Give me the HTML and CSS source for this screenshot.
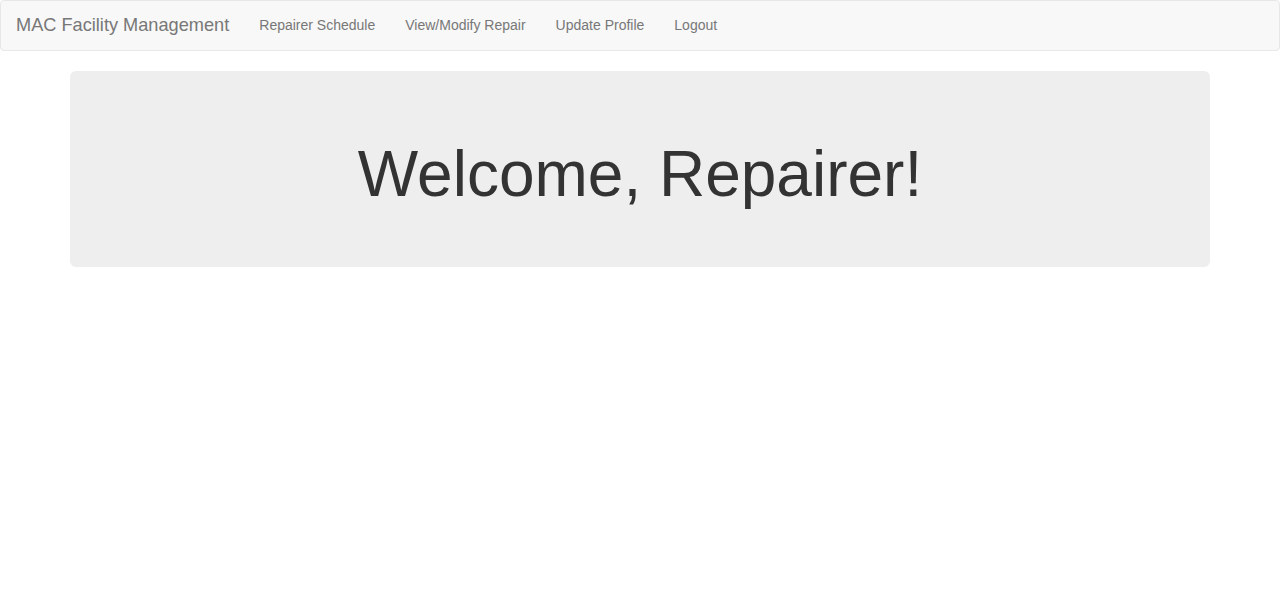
FILE: index.html
```html
<!DOCTYPE html>
<html lang="en">
<head>
<meta charset="utf-8">
<title>MAC Facility Management</title>
<link rel="stylesheet" href="styles.css">
</head>
<body>
<nav class="navbar">
  <a class="brand" href="#">MAC Facility Management</a>
  <ul class="nav">
    <li><a href="#">Repairer Schedule</a></li>
    <li><a href="#">View/Modify Repair</a></li>
    <li><a href="#">Update Profile</a></li>
    <li><a href="#">Logout</a></li>
  </ul>
</nav>
<div class="container">
  <div class="jumbotron">
    <h1>Welcome, Repairer!</h1>
  </div>
</div>
</body>
</html>
```

FILE: styles.css
```css
* { box-sizing: border-box; }
html, body { margin: 0; padding: 0; }
body {
  font-family: "Liberation Sans", Arial, Helvetica, sans-serif;
  font-size: 14px;
  line-height: 1.42857;
  color: #333;
  background: #fff;
}
.navbar {
  display: flex;
  align-items: center;
  height: 51px;
  padding-bottom: 1px;
  background: #f8f8f8;
  border: 1px solid #e7e7e7;
  border-radius: 4px;
  margin-bottom: 20px;
}
.brand {
  padding: 0 15px;
  font-size: 18.2px;
  line-height: 20px;
  color: #777;
  text-decoration: none;
}
.nav {
  display: flex;
  list-style: none;
  margin: 0;
  padding: 0;
}
.nav a {
  display: block;
  padding: 0 15px;
  line-height: 20px;
  color: #777;
  text-decoration: none;
}
.container {
  width: 1170px;
  margin: 0 auto;
  padding: 0 15px;
}
.jumbotron {
  background: #eee;
  border-radius: 6px;
  padding: 48px 60px;
  text-align: center;
}
.jumbotron h1 {
  margin: 20px 0 10px;
  font-size: 64px;
  font-weight: 500;
  line-height: 1.1;
  color: #333;
}
```
